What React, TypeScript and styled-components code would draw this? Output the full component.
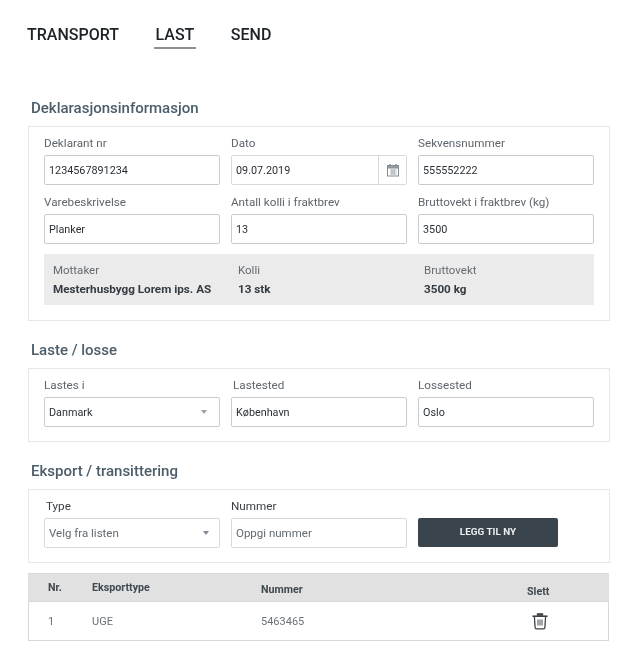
import React from 'react';
import styled, { createGlobalStyle } from 'styled-components';

const GlobalStyle = createGlobalStyle`
  html, body {
    margin: 0;
    padding: 0;
    background: #fff;
    font-family: Roboto, "Liberation Sans", sans-serif;
  }
  * {
    box-sizing: border-box;
  }
`;

function CalendarIcon() {
  return (
    <svg width="14" height="14" viewBox="0 0 14 14" fill="none" stroke="#858a8f" strokeWidth="1">
      <rect x="1.5" y="2.5" width="11" height="10.5" />
      <rect x="1.5" y="2.5" width="11" height="2.5" fill="#9a9fa4" />
      <path d="M4 1v2.5M10 1v2.5" strokeWidth="1.4" />
      <path d="M4 7h6.5M4 9h6.5M4 11h6.5M6 6.5v5M8.2 6.5v5" strokeWidth="0.8" stroke="#a0a5a9" />
    </svg>
  );
}

function TrashIcon() {
  return (
    <svg width="18" height="18" viewBox="0 0 18 18" fill="none" stroke="#3f4347" strokeWidth="1.3">
      <path d="M1.5 4.2h15" strokeWidth="1.6" />
      <path d="M6.5 3.8V1.8h5v2" fill="#3f4347" />
      <path d="M3.4 4.5l.7 11c.05.8.5 1.3 1.3 1.3h7.2c.8 0 1.25-.5 1.3-1.3l.7-11" />
      <path d="M7 7.5v6M9 7.5v6M11 7.5v6" strokeWidth="1.1" stroke="#55595d" />
    </svg>
  );
}

const Page = styled.div`
  width: 629px;
  height: 666px;
  padding: 26px 19px 0 28px;
  overflow: hidden;
  filter: blur(0.35px);
`;

const Tabs = styled.nav`
  display: flex;
  gap: 32.5px;
  margin-left: -3px;
  height: 23px;
`;

const Tab = styled.div<{ $active?: boolean }>`
  padding: 0 2px;
  height: 23px;
  line-height: 18px;
  font-size: 16px;
  font-weight: 500;
  color: #1d2226;
  border-bottom: ${(p) => (p.$active ? '2px solid #8c8f92' : '2px solid transparent')};
`;

const SectionTitle = styled.h2<{ $top: number }>`
  margin: ${(p) => p.$top}px 0 0 3px;
  height: 18px;
  line-height: 18px;
  font-size: 15px;
  font-weight: 500;
  color: #4c5d6a;
`;

const Card = styled.section<{ $height: number }>`
  margin-top: 9px;
  height: ${(p) => p.$height}px;
  border: 1.5px solid #e5e7e8;
  padding: 8px 15px 0 15px;
`;

const FieldGrid = styled.div`
  display: grid;
  grid-template-columns: 176px 176px 176px;
  column-gap: 11px;
  row-gap: 9px;
`;

const Field = styled.div`
  display: flex;
  flex-direction: column;
`;

const Label = styled.label<{ $dark?: boolean; $indent?: number }>`
  height: 20px;
  line-height: 16px;
  font-size: 11.7px;
  margin-left: ${(p) => p.$indent ?? 0}px;
  color: ${(p) => (p.$dark ? '#3a4046' : '#5e656b')};
`;

const InputBox = styled.div<{ $light?: boolean }>`
  display: flex;
  align-items: center;
  height: 30px;
  padding-left: 4px;
  background: #fff;
  border: ${(p) => (p.$light ? '1px solid #d5dadd' : '1.5px solid #c6ccd1')};
  border-radius: 2px;
  font-size: 10.8px;
  color: #2b3035;
`;

const InputText = styled.span<{ $muted?: boolean }>`
  flex: ${(p) => (p.$muted ? '0 1 auto' : '1')};
  font-size: ${(p) => (p.$muted ? '11.5px' : '10.8px')};
  color: ${(p) => (p.$muted ? '#62696f' : '#2b3035')};
`;

const SelectValue = styled(InputText)`
  flex: 1;
`;

const CalendarAddon = styled.span`
  display: flex;
  align-items: center;
  justify-content: center;
  width: 28px;
  height: 100%;
  border-left: 1px solid #d5dadd;
`;

const Caret = styled.span<{ $dark?: boolean }>`
  width: 0;
  height: 0;
  margin-right: ${(p) => (p.$dark ? 10 : 12)}px;
  border-left: 3.5px solid transparent;
  border-right: 3.5px solid transparent;
  border-top: 4px solid ${(p) => (p.$dark ? '#7f8a94' : '#9aa1a7')};
`;

const SummaryPanel = styled.div`
  display: grid;
  grid-template-columns: 185px 186px 1fr;
  height: 51px;
  margin-top: 10px;
  padding: 9px 0 0 9px;
  background: #ebebeb;
`;

const SummaryItem = styled.div`
  display: flex;
  flex-direction: column;
  gap: 4px;
`;

const SummaryLabel = styled.span`
  line-height: 15px;
  font-size: 11.5px;
  color: #656b70;
`;

const SummaryValue = styled.span`
  line-height: 15px;
  font-size: 11.7px;
  font-weight: 700;
  color: #343b42;
  white-space: nowrap;
`;

const AddButton = styled.button`
  align-self: end;
  width: 140px;
  height: 29px;
  margin-bottom: 1px;
  padding: 0 0 2px;
  border: 0;
  border-radius: 2px;
  background: #3a444d;
  color: #eceeef;
  font-family: inherit;
  font-size: 9.9px;
  font-weight: 700;
`;

const Table = styled.div`
  margin-top: 10px;
  width: 581px;
  border: 1px solid #d5d9dc;
  border-top: 0;
`;

const HeaderRow = styled.div`
  display: grid;
  grid-template-columns: 44px 169px 1fr 82px;
  height: 29px;
  margin: 0 -1px;
  padding-left: 20px;
  background: #e1e1e1;
  border-top: 1px solid #d5d9dc;
  border-bottom: 1px solid #d5d9dc;
  font-size: 10.7px;
  font-weight: 700;
  color: #40484f;
`;

const HeaderCell = styled.div<{ $offset: number }>`
  padding-top: ${(p) => p.$offset}px;
  line-height: 14px;
  white-space: nowrap;
`;

const BodyRow = styled.div`
  display: grid;
  grid-template-columns: 44px 169px 1fr 82px;
  align-items: center;
  height: 38px;
  padding-left: 19px;
  font-size: 11px;
  color: #6a7177;
`;

const IconCell = styled.div`
  display: flex;
  padding-left: 5px;
`;

export default function App() {
  return (
    <>
      <GlobalStyle />
      <Page>
        <Tabs>
          <Tab>TRANSPORT</Tab>
          <Tab $active>LAST</Tab>
          <Tab>SEND</Tab>
        </Tabs>

        <SectionTitle $top={50}>Deklarasjonsinformasjon</SectionTitle>
        <Card $height={195}>
          <FieldGrid>
            <Field>
              <Label>Deklarant nr</Label>
              <InputBox>1234567891234</InputBox>
            </Field>
            <Field>
              <Label>Dato</Label>
              <InputBox $light>
                <InputText>09.07.2019</InputText>
                <CalendarAddon>
                  <CalendarIcon />
                </CalendarAddon>
              </InputBox>
            </Field>
            <Field>
              <Label>Sekvensnummer</Label>
              <InputBox>555552222</InputBox>
            </Field>
            <Field>
              <Label>Varebeskrivelse</Label>
              <InputBox>Planker</InputBox>
            </Field>
            <Field>
              <Label>Antall kolli i fraktbrev</Label>
              <InputBox>13</InputBox>
            </Field>
            <Field>
              <Label>Bruttovekt i fraktbrev (kg)</Label>
              <InputBox>3500</InputBox>
            </Field>
          </FieldGrid>
          <SummaryPanel>
            <SummaryItem>
              <SummaryLabel>Mottaker</SummaryLabel>
              <SummaryValue>Mesterhusbygg Lorem ips. AS</SummaryValue>
            </SummaryItem>
            <SummaryItem>
              <SummaryLabel>Kolli</SummaryLabel>
              <SummaryValue>13 stk</SummaryValue>
            </SummaryItem>
            <SummaryItem>
              <SummaryLabel>Bruttovekt</SummaryLabel>
              <SummaryValue>3500 kg</SummaryValue>
            </SummaryItem>
          </SummaryPanel>
        </Card>

        <SectionTitle $top={20}>Laste / losse</SectionTitle>
        <Card $height={74}>
          <FieldGrid>
            <Field>
              <Label>Lastes i</Label>
              <InputBox>
                <SelectValue>Danmark</SelectValue>
                <Caret />
              </InputBox>
            </Field>
            <Field>
              <Label $indent={2}>Lastested</Label>
              <InputBox>København</InputBox>
            </Field>
            <Field>
              <Label>Lossested</Label>
              <InputBox>Oslo</InputBox>
            </Field>
          </FieldGrid>
        </Card>

        <SectionTitle $top={19.5}>Eksport / transittering</SectionTitle>
        <Card $height={74.5}>
          <FieldGrid>
            <Field>
              <Label $dark $indent={2}>Type</Label>
              <InputBox $light>
                <SelectValue $muted>Velg fra listen</SelectValue>
                <Caret $dark />
              </InputBox>
            </Field>
            <Field>
              <Label $dark>Nummer</Label>
              <InputBox $light>
                <InputText $muted>Oppgi nummer</InputText>
              </InputBox>
            </Field>
            <AddButton>LEGG TIL NY</AddButton>
          </FieldGrid>
        </Card>

        <Table>
          <HeaderRow>
            <HeaderCell $offset={7}>Nr.</HeaderCell>
            <HeaderCell $offset={7}>Eksporttype</HeaderCell>
            <HeaderCell $offset={9}>Nummer</HeaderCell>
            <HeaderCell $offset={11}>Slett</HeaderCell>
          </HeaderRow>
          <BodyRow>
            <div>1</div>
            <div>UGE</div>
            <div>5463465</div>
            <IconCell>
              <TrashIcon />
            </IconCell>
          </BodyRow>
        </Table>
      </Page>
    </>
  );
}
